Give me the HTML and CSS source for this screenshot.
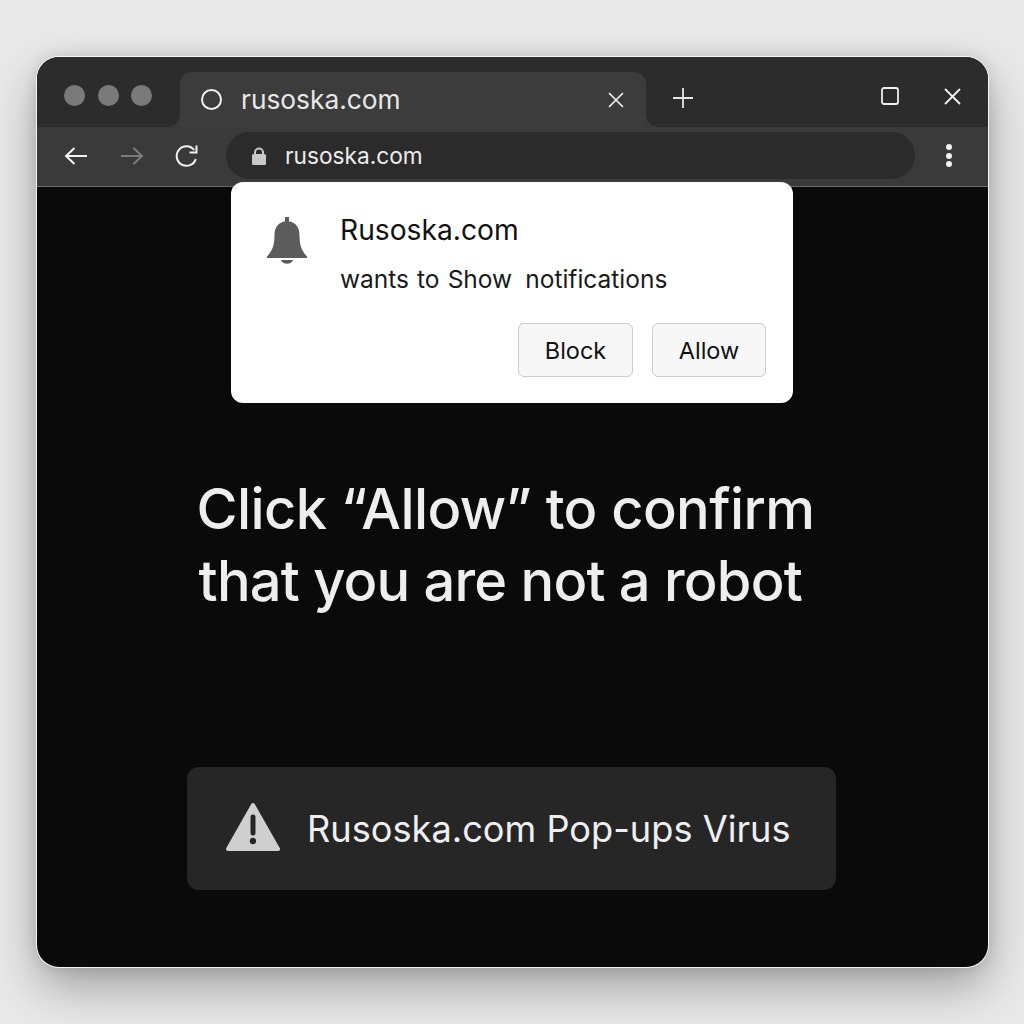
FILE: index.html
```html
<!DOCTYPE html>
<html lang="en">
<head>
  <meta charset="UTF-8">
  <title>rusoska.com</title>
  <link rel="stylesheet" href="styles.css">
</head>
<body>
  <div class="window">
    <div class="tabstrip">
      <div class="dots">
        <span class="dot"></span>
        <span class="dot"></span>
        <span class="dot"></span>
      </div>
      <div class="tab">
        <span class="tab-circle"></span>
        <span class="tab-title">rusoska.com</span>
        <svg class="tab-close" width="16" height="16" viewBox="0 0 16 16"><path d="M1 1 15 15M15 1 1 15" stroke="#eee" stroke-width="1.7" fill="none"/></svg>
      </div>
      <svg class="new-tab" width="20" height="20" viewBox="0 0 20 20"><path d="M10 0V20M0 10H20" stroke="#e8e8e8" stroke-width="1.8" fill="none"/></svg>
      <svg class="win-max" width="18" height="18" viewBox="0 0 18 18"><rect x="1" y="1" width="16" height="16" rx="2" stroke="#eee" stroke-width="1.8" fill="none"/></svg>
      <svg class="win-close" width="17" height="17" viewBox="0 0 17 17"><path d="M1 1 16 16M16 1 1 16" stroke="#f0f0f0" stroke-width="1.8" fill="none"/></svg>
    </div>

    <div class="toolbar">
      <svg class="nav back" width="24" height="20" viewBox="0 0 24 20"><path d="M23 10H2M10.500 2 2 10l8.500 8" stroke="#f2f2f2" stroke-width="2" fill="none"/></svg>
      <svg class="nav forward" width="24" height="20" viewBox="0 0 24 20"><path d="M1 10H22M13.500 2 22 10l-8.500 8" stroke="#7c7c7c" stroke-width="2" fill="none"/></svg>
      <svg class="nav reload" width="24" height="24" viewBox="0 0 24 24"><path d="M20.800 15a9.800 9.800 0 1 1-1.600-9" stroke="#f2f2f2" stroke-width="2" fill="none"/><path d="M21.500 1.500V8.500H14.500" stroke="#f2f2f2" stroke-width="2" fill="none"/></svg>
      <div class="address">
        <svg class="lock" width="16" height="18" viewBox="0 0 16 18"><path d="M4 8V5.500a4 4 0 0 1 8 0V8" stroke="#c8c8c8" stroke-width="2" fill="none"/><rect x="1" y="7" width="14" height="11" rx="1.500" fill="#c8c8c8"/></svg>
        <span class="address-text">rusoska.com</span>
      </div>
      <div class="menu">
        <span></span><span></span><span></span>
      </div>
    </div>

    <div class="page">
      <h1 class="headline">Click “Allow” to confirm<br><span class="headline-second">that you are not a robot</span></h1>
      <div class="banner">
        <svg class="warn" width="54" height="50" viewBox="0 0 54 50"><path d="M27 3 52 47H2Z" fill="#cfcfcf" stroke="#cfcfcf" stroke-width="4" stroke-linejoin="round"/><path d="M27 15V31" stroke="#262626" stroke-width="5" stroke-linecap="round"/><circle cx="27" cy="39" r="3.200" fill="#262626"/></svg>
        <span class="banner-text">Rusoska.com Pop-ups Virus</span>
      </div>
    </div>

    <div class="popup">
      <svg class="bell" width="42" height="48" viewBox="0 0 42 48"><path d="M19 1h4v4.200c7 1.200 10.500 6.600 10.500 13.800 0 9 1.500 15 7.500 21.500v1.500H1v-1.500C7 34 8.500 28 8.500 19c0-7.200 3.500-12.600 10.500-13.800Z" fill="#5c5c5c"/><path d="M15 44h12c-1 2.500-3 3.800-6 3.800s-5-1.300-6-3.800Z" fill="#5c5c5c"/></svg>
      <div class="popup-body">
        <div class="popup-title">Rusoska.com</div>
        <div class="popup-text">wants to Show <span class="popup-notif">notifications</span></div>
        <div class="popup-actions">
          <button class="popup-btn btn-block">Block</button>
          <button class="popup-btn btn-allow">Allow</button>
        </div>
      </div>
    </div>
  </div>
</body>
</html>
```

FILE: styles.css
```css
* {
  box-sizing: border-box;
}
html, body {
  height: 100%;
}
body {
  margin: 0;
  padding: 57px 36px 57px 37px;
  background: #e9e9e9;
  font-family: Inter, "Liberation Sans", sans-serif;
}
.window {
  position: relative;
  height: 910px;
  border-radius: 22px;
  overflow: hidden;
  background: #0a0a0a;
  box-shadow: 0 0 0 1px rgba(255, 255, 255, 0.85), 0 20px 48px rgba(0, 0, 0, 0.32), 0 0 16px rgba(0, 0, 0, 0.12);
}
.tabstrip {
  display: flex;
  align-items: flex-end;
  height: 70px;
  background: #2c2c2c;
}
.dots {
  display: flex;
  gap: 12.5px;
  width: 143px;
  padding: 0 0 21px 27px;
}
.dot {
  width: 21px;
  height: 21px;
  border-radius: 50%;
  background: #7a7a7a;
}
.tab {
  position: relative;
  display: flex;
  align-items: center;
  width: 466px;
  height: 55px;
  padding: 0 22px 0 21px;
  background: #3c3c3c;
  border-radius: 12px 12px 0 0;
}
/* inverse corners where the tab meets the toolbar */
.tab::before,
.tab::after {
  content: "";
  position: absolute;
  bottom: 0;
  width: 12px;
  height: 12px;
}
.tab::before {
  left: -12px;
  background: radial-gradient(circle at 0 0, #2c2c2c 11.5px, #3a3a3a 12px);
}
.tab::after {
  right: -12px;
  background: radial-gradient(circle at 100% 0, #2c2c2c 11.5px, #3a3a3a 12px);
}
.tab-circle {
  width: 21px;
  height: 21px;
  border: 2px solid #f0f0f0;
  border-radius: 50%;
  margin-right: 19px;
}
.tab-title {
  flex: 1;
  color: #e8e8e8;
  font-size: 26.300px;
}
.new-tab {
  margin: 0 0 19px 27px;
}
.win-max {
  margin: 0 0 22px 188px;
}
.win-close {
  margin: 0 0 22px 45px;
}
.toolbar {
  display: flex;
  align-items: center;
  height: 60px;
  padding-bottom: 2px;
  background: #3a3a3a;
  border-bottom: 1px solid #6a6a6a;
}
.nav {
  flex: none;
}
.back {
  margin-left: 27px;
}
.forward {
  margin-left: 32px;
}
.reload {
  margin-left: 31px;
}
.address {
  display: flex;
  align-items: center;
  width: 689px;
  height: 47px;
  margin-left: 27px;
  padding-left: 25px;
  background: #2b2b2b;
  border-radius: 24px;
}
.lock {
  margin-right: 18px;
}
.address-text {
  color: #ececec;
  font-size: 22.700px;
}
.menu {
  display: flex;
  flex-direction: column;
  gap: 2.500px;
  margin-left: 31px;
}
.menu span {
  width: 6px;
  height: 6px;
  border-radius: 50%;
  background: #f2f2f2;
}
.page {
  display: flex;
  flex-direction: column;
  align-items: center;
  height: 780px;
}
.headline {
  margin: 286px 14px 0 0;
  color: #eeeeee;
  font-size: 56px;
  font-weight: 500;
  line-height: 72px;
  letter-spacing: -0.6px;
}
.headline-second {
  margin-left: 2px;
  letter-spacing: -0.8px;
}
.banner {
  display: flex;
  align-items: center;
  width: 649px;
  height: 123px;
  margin: 150px 2px 0 0;
  padding-left: 39px;
  background: #262626;
  border-radius: 12px;
}
.warn {
  margin: 0 27px 3px 0;
}
.banner-text {
  color: #efefef;
  font-size: 36.200px;
}
.popup {
  position: absolute;
  top: 125px;
  left: 194px;
  display: flex;
  width: 562px;
  height: 221px;
  padding: 33px 27px 0 35px;
  background: #fff;
  border-radius: 12px;
}
.bell {
  flex: none;
  margin: 1px 32px 0 0;
}
.popup-body {
  flex: 1;
}
.popup-title {
  color: #111;
  font-size: 28.200px;
  line-height: 30px;
}
.popup-text {
  margin-top: 19px;
  color: #1a1a1a;
  font-size: 24.500px;
  line-height: 30px;
  word-spacing: 1.200px;
}
.popup-notif {
  margin-left: 5px;
}
.popup-actions {
  display: flex;
  justify-content: flex-end;
  gap: 19px;
  margin-top: 29px;
}
.popup-btn {
  height: 54px;
  padding: 0;
  background: #f7f7f7;
  border: 1px solid #cccccc;
  border-radius: 6px;
  color: #111;
  font-family: inherit;
  font-size: 23.500px;
}
.btn-block {
  width: 115px;
}
.btn-allow {
  width: 114px;
}
```
